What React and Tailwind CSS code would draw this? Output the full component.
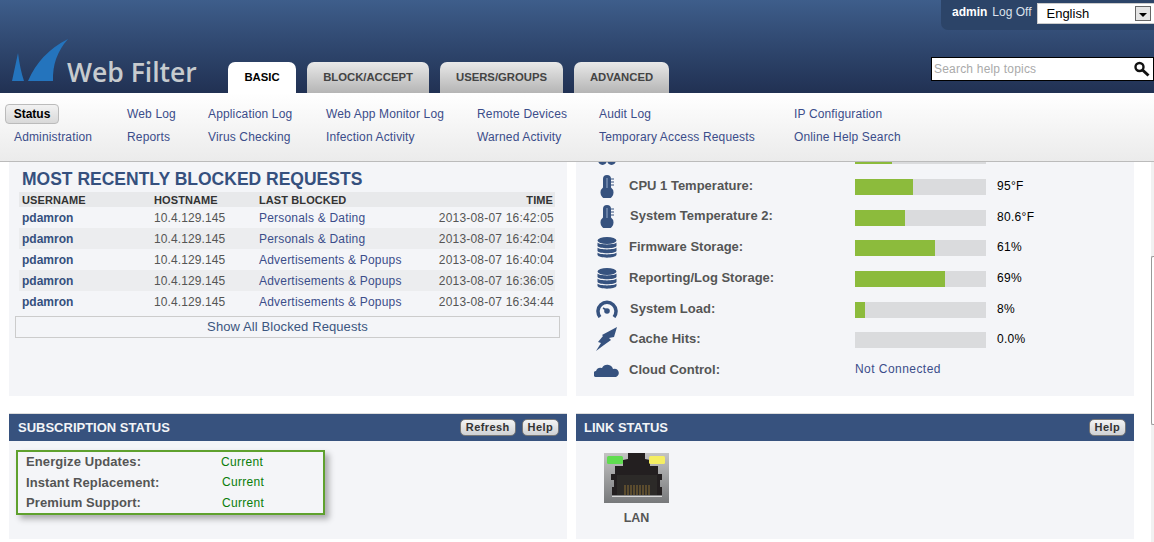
import React from "react";

const font = { fontFamily: '"Liberation Sans", Arial, sans-serif' };

const navCols = [
  ["w-[113px] pl-[5px]", "Status", "Administration"],
  ["w-[81px]", "Web Log", "Reports"],
  ["w-[118px]", "Application Log", "Virus Checking"],
  ["w-[151px]", "Web App Monitor Log", "Infection Activity"],
  ["w-[122px]", "Remote Devices", "Warned Activity"],
  ["w-[195px]", "Audit Log", "Temporary Access Requests"],
  ["w-[150px]", "IP Configuration", "Online Help Search"],
];

const blocked = [
  ["Personals & Dating", "2013-08-07 16:42:05"],
  ["Personals & Dating", "2013-08-07 16:42:04"],
  ["Advertisements & Popups", "2013-08-07 16:40:04"],
  ["Advertisements & Popups", "2013-08-07 16:36:05"],
  ["Advertisements & Popups", "2013-08-07 16:34:44"],
];

const Thermo = () => (
  <svg width="14" height="23" viewBox="0 0 14 23" fill="#36527f">
    <path d="M3 4a4 4 0 0 1 8 0v8.500a6.500 6.500 0 1 1-8 0z" />
    <path d="M11 4h3M11 7h3M11 10h3" stroke="#36527f" strokeWidth="1" />
    <rect x="6.300" y="3" width="1.400" height="10" fill="#7d93b5" />
  </svg>
);
const Db = () => (
  <svg width="20" height="21" viewBox="0 0 20 21" fill="#36527f">
    <ellipse cx="10" cy="3.5" rx="9.5" ry="3.5" />
    <path d="M.5 5.5C2 8 18 8 19.500 5.500V9C18 12 2 12 .5 9z" />
    <path d="M.5 10.500C2 13 18 13 19.500 10.500V14C18 17 2 17 .5 14z" />
    <path d="M.5 15.500C2 18 18 18 19.500 15.500V18C18 21.500 2 21.500 .5 18z" />
  </svg>
);
const Fan = () => (
  <svg width="18" height="24" viewBox="0 0 18 24" fill="#36527f">
    <ellipse cx="9" cy="6" rx="4" ry="6" />
    <ellipse cx="4.500" cy="17" rx="4.500" ry="5" />
    <ellipse cx="13.500" cy="17" rx="4.500" ry="5" />
  </svg>
);
const Gauge = () => (
  <svg width="22" height="18" viewBox="0 0 22 18" fill="none">
    <path d="M4 17A9 9 0 1 1 18 17" stroke="#36527f" strokeWidth="3.500" />
    <path d="M7 8l5 3" stroke="#36527f" strokeWidth="1.500" />
    <circle cx="11" cy="11" r="2.800" fill="#36527f" />
  </svg>
);
const Bolt = () => (
  <svg width="22" height="24" viewBox="0 0 22 24" fill="#36527f">
    <path d="M21 0 L18 10 L13 11 L15 13 L8 18 L0 24 L5 16 L2 15 L7 9 L6 8 Z" />
  </svg>
);
const Cloud = () => (
  <svg width="25" height="14" viewBox="0 0 25 14" fill="#36527f">
    <path d="M3 14a3 3 0 0 1-1-6 5 5 0 0 1 6-3 6 6 0 0 1 11 1 4 4 0 0 1 3 8z" />
  </svg>
);

const stats = [
  ["System Temperature 1:", 28, "72°F", <Fan key="a" />],
  ["CPU 1 Temperature:", 44, "95°F", <Thermo key="b" />],
  ["System Temperature 2:", 38, "80.6°F", <Thermo key="c" />],
  ["Firmware Storage:", 61, "61%", <Db key="d" />],
  ["Reporting/Log Storage:", 69, "69%", <Db key="e" />],
  ["System Load:", 8, "8%", <Gauge key="f" />],
  ["Cache Hits:", 0, "0.0%", <Bolt key="g" />],
];

const MiniBtn = ({ children }) => (
  <span className="flex h-[17px] items-center rounded-[5px] border border-[#777] bg-gradient-to-b from-[#f4f4f4] to-[#cfd1d4] px-[5px] text-[11px] font-bold leading-none tracking-[0.4px] text-[#333]">
    {children}
  </span>
);

const PanelHead = ({ title, left, children }) => (
  <div className={`flex h-[27px] items-center justify-between bg-[#37527e] pr-[8px] ${left}`}>
    <span className="text-[13px] font-bold leading-none text-[#f2f4f7]">{title}</span>
    <div className="flex gap-[6px]">{children}</div>
  </div>
);

export default function App() {
  return (
    <div style={font} className="flex h-[542px] w-[1154px] flex-col overflow-hidden bg-white">
      <header className="relative flex h-[93px] shrink-0 items-end bg-gradient-to-b from-[#3e5e8b] to-[#213153] pl-[12px]">
        <div className="flex h-[60px] w-[216px] items-end pb-[8px]">
          <svg width="60" height="42" viewBox="0 0 60 42" className="mb-[4px] shrink-0" fill="#2474bd">
            <path d="M0 42 L6 14 Q8 30 12 42 Z" />
            <path d="M16 42 Q28 14 56 0 Q40 18 41 42 Z" />
          </svg>
          <span
            style={{ fontFamily: '"Open Sans", sans-serif' }}
            className="-ml-[5px] mb-[0px] text-[26.500px] font-semibold leading-none text-[#c7cbce]"
          >
            Web Filter
          </span>
        </div>
        <nav className="flex gap-[11px]">
          <div className="flex h-[31px] w-[68px] items-center justify-center rounded-t-[7px] bg-white text-[11.300px] font-bold text-black">BASIC</div>
          {[
            ["w-[122px]", "BLOCK/ACCEPT"],
            ["w-[123px]", "USERS/GROUPS"],
            ["w-[95px]", "ADVANCED"],
          ].map(([w, t]) => (
            <div key={t} className={`flex h-[31px] items-center justify-center rounded-t-[7px] bg-gradient-to-b from-[#e9e9e9] to-[#b5b5b5] text-[11.300px] font-bold text-[#444] ${w}`}>
              {t}
            </div>
          ))}
        </nav>
        <div className="absolute right-0 top-0 flex h-[30px] w-[213px] items-start rounded-bl-[7px] bg-[#2c4468] pl-[11px] pt-[5px] text-[12px] leading-[14px]">
          <span className="shrink-0 whitespace-nowrap font-bold text-white">admin</span>
          <span className="ml-[5px] shrink-0 whitespace-nowrap text-[#dbe2ec]">Log Off</span>
          <div className="ml-[6px] -mt-[2px] flex h-[21px] w-[118px] shrink-0 items-center justify-between border border-[#ccc] bg-white pl-[8px] pr-[3px] text-[13px] text-black">
            English
            <span className="flex h-[15px] w-[16px] items-end justify-center border border-[#666] bg-[#e4e4e4] pb-[3px]">
              <span className="h-0 w-0 border-x-[4px] border-t-[4px] border-x-transparent border-t-black" />
            </span>
          </div>
        </div>
        <div className="absolute right-0 top-[57px] flex h-[24px] w-[223px] items-center justify-between border border-black bg-white pl-[2px] pr-[2px] text-[12px] tracking-[0.2px] text-[#aaa]">
          Search help topics
          <svg width="18" height="16" viewBox="0 0 18 16" fill="none" className="shrink-0">
            <circle cx="6.500" cy="6" r="4" stroke="#111" strokeWidth="2.400" />
            <path d="M9.500 9l6 5.500" stroke="#111" strokeWidth="3" />
          </svg>
        </div>
      </header>

      <div className="z-10 flex h-[69px] shrink-0 border-b border-[#bbb] bg-gradient-to-b from-white to-[#ebebeb] pt-[11px]">
        {navCols.map(([w, a, b]) => (
          <div key={a} className={`flex shrink-0 flex-col text-[12px] tracking-[0.15px] text-[#3b4d8a] ${w} ${a === "Status" ? "" : "pl-[14px]"}`}>
            {a === "Status" ? (
              <span className="flex h-[20px] w-[54px] items-center justify-center rounded-[4px] border border-[#bbb] bg-gradient-to-b from-[#f2f2f2] to-[#d9d9d9] font-bold tracking-normal text-black">Status</span>
            ) : (
              <span className="flex h-[20px] items-center">{a}</span>
            )}
            <span className={`mt-[3px] flex h-[20px] items-center ${a === "Status" ? "pl-[9px]" : ""}`}>{b}</span>
          </div>
        ))}
      </div>

      <main className="relative flex min-h-0 flex-1 flex-col overflow-hidden px-[9px] text-[12px]">
        <div className="absolute bottom-0 right-0 top-0 w-[3px] bg-[#f1f1f1]">
          <div className="mt-[94px] h-[169px] rounded-l-[2px] border-y border-l border-[#999] bg-white" />
        </div>
        <div className="flex h-[234px] shrink-0 gap-[9px]">
          <section className="flex w-[558px] flex-col bg-[#f4f5f8] px-[6px]">
            <h2 className="ml-[7px] mt-[8px] h-[22px] text-[17.500px] font-bold leading-[18px] text-[#35507e]">MOST RECENTLY BLOCKED REQUESTS</h2>
            <div className="ml-[4px] mr-[6px] flex flex-col">
              <div className="grid h-[15px] grid-cols-[132px_105px_1fr_auto] items-center bg-[#e8e9eb] pl-[3px] pr-[2px] text-[11px] font-bold tracking-[0.1px] text-[#333]">
                <span>USERNAME</span><span>HOSTNAME</span><span>LAST BLOCKED</span><span>TIME</span>
              </div>
              {blocked.map(([cat, time], i) => (
                <div key={time} className={`grid h-[21px] grid-cols-[132px_105px_1fr_auto] items-center pl-[3px] pr-[1px] ${i % 2 ? "bg-[#ecedef]" : ""}`}>
                  <span className="font-bold text-[#35507e]">pdamron</span>
                  <span className="tracking-[0.1px] text-[#555]">10.4.129.145</span>
                  <span className="tracking-[0.2px] text-[#3b4d8a]">{cat}</span>
                  <span className="tracking-[0.2px] text-[#555]">{time}</span>
                </div>
              ))}
            </div>
            <div className="mr-[1px] mt-[4px] flex h-[22px] items-center justify-center border border-[#ccc] text-[13px] tracking-[0.1px] text-[#3b5580]">Show All Blocked Requests</div>
          </section>

          <section className="flex w-[558px] flex-col overflow-hidden bg-[#f4f5f8]">
            <div className="-mt-[21px] flex flex-col">
              {stats.map(([label, pct, val, icon]) => (
                <div key={label} className="flex h-[30.700px] shrink-0 items-center">
                  <span className="flex w-[53px] shrink-0 justify-center pb-[2px] pl-[8px]">{icon}</span>
                  <span className={`mb-[3px] w-[226px] shrink-0 text-[13px] font-bold text-[#555] ${label.startsWith("System") ? "pl-[1px]" : ""}`}>{label}</span>
                  <div className="h-[16px] w-[131px] shrink-0 bg-[#dadbdd]">
                    <div className="h-full bg-[#8cbb3c]" style={{ width: `${pct}%` }} />
                  </div>
                  <span className="mb-[2px] ml-[11px] text-[12px] tracking-[0.3px] text-black">{val}</span>
                </div>
              ))}
              <div className="flex h-[30.700px] shrink-0 items-center">
                <span className="flex w-[53px] shrink-0 justify-center pb-[2px] pl-[8px]"><Cloud /></span>
                <span className="mb-[3px] w-[226px] shrink-0 text-[13px] font-bold text-[#555]">Cloud Control:</span>
                <span className="mb-[5px] text-[12px] tracking-[0.45px] text-[#3b4d8a]">Not Connected</span>
              </div>
            </div>
          </section>
        </div>

        <div className="mt-[17px] flex h-[126px] shrink-0 gap-[9px]">
          <section className="flex w-[558px] flex-col border-t border-[#ddd] bg-[#f4f5f8]">
            <PanelHead title="SUBSCRIPTION STATUS" left="pl-[9px]">
              <MiniBtn>Refresh</MiniBtn>
              <MiniBtn>Help</MiniBtn>
            </PanelHead>
            <div className="ml-[7px] mt-[9px] flex h-[65px] w-[309px] flex-col justify-center border-2 border-[#5fa12e] pl-[8px] shadow-[4px_4px_6px_rgba(0,0,0,0.3)]">
              {["Energize Updates:", "Instant Replacement:", "Premium Support:"].map((l, i) => (
                <div key={l} className="flex h-[21px] items-center">
                  <span className={`shrink-0 text-[13px] font-bold tracking-[0.1px] text-[#555] ${i === 0 ? "w-[195px]" : "w-[196px]"}`}>{l}</span>
                  <span className="tracking-[0.3px] text-[#0a7d0a]">Current</span>
                </div>
              ))}
            </div>
          </section>
          <section className="flex w-[558px] flex-col border-t border-[#ddd] bg-[#f4f5f8]">
            <PanelHead title="LINK STATUS" left="pl-[8px]">
              <MiniBtn>Help</MiniBtn>
            </PanelHead>
            <div className="ml-[28px] mt-[12px] flex w-[65px] flex-col items-center">
              <svg width="65" height="50" viewBox="0 0 65 50">
                <defs>
                  <linearGradient id="lan" x1="0" y1="0" x2="0" y2="1">
                    <stop offset="0" stopColor="#c4c4c4" />
                    <stop offset="1" stopColor="#77797b" />
                  </linearGradient>
                </defs>
                <rect width="65" height="50" fill="url(#lan)" />
                <path d="M24 0H41V6L46 7V13H54V21H58V27H56V34H58V42H8V34H10V27H7V21H11V13H19V7L24 6Z" fill="#231f20" />
                <rect x="13" y="22" width="40" height="20" fill="#2c2a28" />
                <path d="M21 32v10M24 32v10M27 32v10M30 32v10M33 32v10M36 32v10M39 32v10M42 32v10M45 32v10" stroke="#8a6f35" strokeWidth="1" />
                <rect x="8" y="43" width="50" height="1" fill="#d8d8d8" />
                <rect x="3" y="3" width="16" height="8" rx="1.500" fill="#5fdc4f" />
                <rect x="45" y="3" width="16" height="8" rx="1.500" fill="#f5ee62" />
              </svg>
              <span className="mt-[8px] text-[12.500px] font-bold leading-[14px] text-[#555]">LAN</span>
            </div>
          </section>
        </div>
      </main>
    </div>
  );
}
